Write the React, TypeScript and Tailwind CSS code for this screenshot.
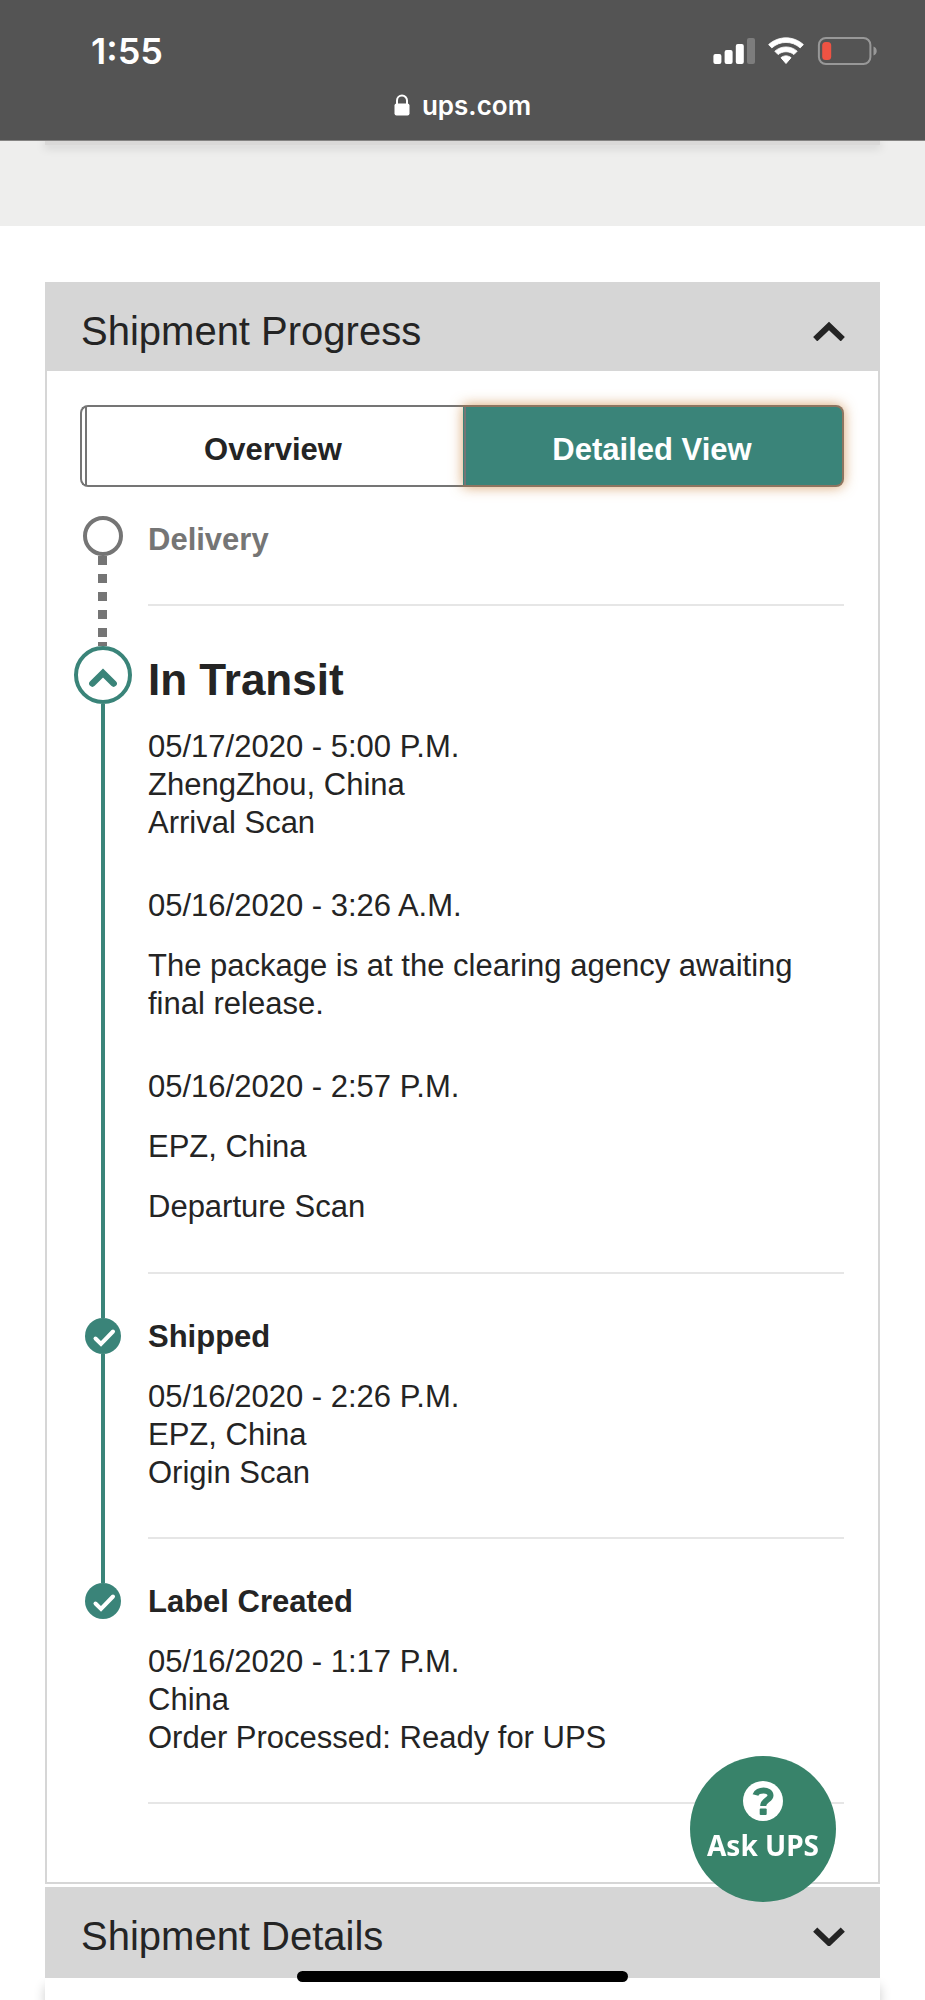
import React, { useState } from "react";

function Chevron({ down = false }: { down?: boolean }) {
  return (
    <svg className="h-5 w-8 shrink-0" viewBox="0 0 32 20" fill="none" stroke="currentColor" strokeWidth="6" aria-hidden="true">
      <path d={down ? "M2.2 3.6 16 16.8 29.8 3.6" : "M2.2 18.2 16 5 29.8 18.2"} />
    </svg>
  );
}

function CheckMark() {
  return (
    <svg className="size-9 shrink-0" viewBox="0 0 36 36" fill="none" aria-hidden="true">
      <circle cx="18" cy="18" r="18" fill="#3a8479" />
      <path d="M10.5 20.5 16 26 28 13.5" stroke="#fff" strokeWidth="4" strokeLinecap="round" strokeLinejoin="miter" />
    </svg>
  );
}

function StatusBar() {
  return (
    <header className="relative z-10 flex flex-col border-b border-[#858483] bg-[#545454] text-white">
      <div className="flex h-[84px] items-center justify-between pt-[17px] pr-[48px] pl-[91px]">
        <time className="font-['Inter',sans-serif] text-[36px] leading-10 font-semibold">1:55</time>
        <div className="flex items-center gap-[13px]">
          <svg className="h-7 w-[42px]" viewBox="0 0 42 28" aria-label="Cellular signal">
            <rect x="0.4" y="17" width="8" height="10" rx="2" fill="#fff" />
            <rect x="11.6" y="13" width="8" height="14" rx="2" fill="#fff" />
            <rect x="22.8" y="7" width="8" height="20" rx="2" fill="#fff" />
            <rect x="34" y="1" width="8" height="26" rx="2" fill="#7d7d7d" />
          </svg>
          <svg className="h-7 w-9" viewBox="0 0 36 28" aria-label="Wi-Fi">
            <path d="M.6 7.6C10.400-1.400 25.600-1.400 35.400 7.600L32.200 10.900C24 3.600 12 3.600 3.800 10.900Z" fill="#fff" stroke="#fff" strokeWidth="0.8" />
            <path d="M6.800 14.200C13.200 8.500 22.800 8.500 29.200 14.200L25.900 17.600C21.400 13.800 14.600 13.800 10.100 17.600Z" fill="#fff" stroke="#fff" strokeWidth="0.8" />
            <path d="M13 20.700C15.900 18.300 20.100 18.300 23 20.700L18 26.500Z" fill="#fff" stroke="#fff" strokeLinejoin="round" />
          </svg>
          <svg className="h-7 w-[60px]" viewBox="0 0 60 28" aria-label="Low battery">
            <rect x="1.900" y="1" width="51.500" height="26" rx="7" fill="none" stroke="#989898" strokeWidth="2" />
            <rect x="5.200" y="5" width="9" height="18" rx="3.500" fill="#ee5343" />
            <path d="M56.500 9.500C60.800 11 60.800 17 56.500 18.500Z" fill="#989898" />
          </svg>
        </div>
      </div>
      <div className="flex h-14 items-start justify-center gap-3">
        <svg className="mt-[10px] h-[22px] w-4" viewBox="0 0 16 22" aria-hidden="true">
          <path d="M3 10V6.500a5 5 0 0 1 10 0V10" fill="none" stroke="#fff" strokeWidth="2" />
          <rect x="0.500" y="9.500" width="15" height="12" rx="2" fill="#fff" />
        </svg>
        <a href="#" className="mt-1 font-['Inter',sans-serif] text-[26px] leading-9 font-semibold">ups.com</a>
      </div>
    </header>
  );
}

function Entry({ lines, spaced = false }: { lines: string[]; spaced?: boolean }) {
  return (
    <div className={spaced ? "flex flex-col gap-[22px]" : "flex flex-col"}>
      {lines.map((line) => (
        <p key={line}>{line}</p>
      ))}
    </div>
  );
}

export default function App() {
  const [detailed, setDetailed] = useState(true);
  const [open, setOpen] = useState(true);

  return (
    <div className="flex min-h-screen flex-col overflow-x-hidden bg-white font-['Liberation_Sans',Arial,sans-serif] text-[31px] leading-[38px] text-[#242424]">
      <StatusBar />
      <div className="h-[85px] bg-[#eeeeed] px-[45px]">
        <div className="h-1 bg-[#dad9d8] shadow-[0_2px_10px_1px_rgba(0,0,0,0.13)]" />
      </div>

      <main className="mt-14 flex grow flex-col px-[45px]">
        <section>
          <h2 className="text-[40px] leading-[48px]">
            <button
              type="button"
              aria-expanded={open}
              onClick={() => setOpen(!open)}
              className="flex w-full items-center justify-between bg-[#d6d6d6] pt-[25px] pr-[35px] pb-4 pl-9 text-left"
            >
              Shipment Progress
              <Chevron down={!open} />
            </button>
          </h2>
          {open && (
            <div className="border-2 border-t-0 border-[#d6d6d6] pt-[34px] pr-[34px] pb-[78px] pl-[27px]">
              <div className="ml-1.5 flex h-[82px] font-bold">
                <button
                  type="button"
                  aria-pressed={!detailed}
                  onClick={() => setDetailed(false)}
                  className="flex flex-1 rounded-l-lg border-2 border-r-0 border-[#757575] pl-[3px]"
                >
                  <span className="flex h-full grow items-center justify-center border-l-2 border-[#757575] pt-2 pr-1">Overview</span>
                </button>
                <button
                  type="button"
                  aria-pressed={detailed}
                  onClick={() => setDetailed(true)}
                  className="flex flex-1 rounded-r-lg border-2 border-l-0 border-[#8d7560] bg-[#3a8479] pl-px text-white shadow-[0_0_13px_rgba(200,125,50,0.7)]"
                >
                  <span className="flex h-full grow items-center justify-center border-l-2 border-[#757575] pt-2 pr-1">Detailed View</span>
                </button>
              </div>

              <ol className="mt-[29px]">
                <li className="flex gap-[17px]">
                  <div className="flex w-[57px] shrink-0 flex-col items-center">
                    <span className="size-10 rounded-full border-4 border-[#757575]" />
                    <span className="w-[9px] grow bg-[linear-gradient(#757575_50%,transparent_50%)] bg-[length:9px_18px]" />
                  </div>
                  <div className="grow border-b-2 border-[#e6e6e6] pt-[5px] pb-[45px]">
                    <h3 className="font-bold text-[#757575]">Delivery</h3>
                  </div>
                </li>

                <li className="flex gap-[17px]">
                  <div className="flex w-[57px] shrink-0 flex-col items-center">
                    <span className="h-9 w-[9px] bg-[linear-gradient(#757575_50%,transparent_50%)] bg-[length:9px_18px] bg-[position:0_4px]" />
                    <span className="h-1 w-[9px] bg-[#757575]" />
                    <button
                      type="button"
                      aria-label="Collapse In Transit"
                      className="flex size-[58px] shrink-0 items-center justify-center rounded-full border-4 border-[#3a8479] pt-1 text-[#3a8479]"
                    >
                      <svg className="h-5 w-7" viewBox="0 0 28 20" fill="none" stroke="currentColor" strokeWidth="6.5" aria-hidden="true">
                        <path d="M3.400 16.500 14 6 24.600 16.500" strokeLinecap="round" />
                      </svg>
                    </button>
                    <span className="w-1 grow bg-[#3a8479]" />
                  </div>
                  <div className="grow border-b-2 border-[#e6e6e6] pt-11 pb-[46px]">
                    <h3 className="mb-[18px] text-[44px] leading-[60px] font-bold">In Transit</h3>
                    <div className="flex flex-col gap-[45px]">
                      <Entry lines={["05/17/2020 - 5:00 P.M.", "ZhengZhou, China", "Arrival Scan"]} />
                      <Entry
                        spaced
                        lines={["05/16/2020 - 3:26 A.M.", "The package is at the clearing agency awaiting final release."]}
                      />
                      <Entry spaced lines={["05/16/2020 - 2:57 P.M.", "EPZ, China", "Departure Scan"]} />
                    </div>
                  </div>
                </li>

                <li className="flex gap-[17px]">
                  <div className="flex w-[57px] shrink-0 flex-col items-center">
                    <span className="h-11 w-1 bg-[#3a8479]" />
                    <CheckMark />
                    <span className="w-1 grow bg-[#3a8479]" />
                  </div>
                  <div className="grow border-b-2 border-[#e6e6e6] pt-11 pb-[45px]">
                    <h3 className="mb-[22px] font-bold">Shipped</h3>
                    <Entry lines={["05/16/2020 - 2:26 P.M.", "EPZ, China", "Origin Scan"]} />
                  </div>
                </li>

                <li className="flex gap-[17px]">
                  <div className="flex w-[57px] shrink-0 flex-col items-center">
                    <span className="h-11 w-1 bg-[#3a8479]" />
                    <CheckMark />
                  </div>
                  <div className="grow border-b-2 border-[#e6e6e6] pt-11 pb-[45px]">
                    <h3 className="mb-[22px] font-bold">Label Created</h3>
                    <Entry lines={["05/16/2020 - 1:17 P.M.", "China", "Order Processed: Ready for UPS"]} />
                  </div>
                </li>
              </ol>
            </div>
          )}
        </section>

        <section className="relative mt-[3px]">
          <h2 className="text-[40px] leading-[48px]">
            <button
              type="button"
              aria-expanded={false}
              className="flex w-full items-center justify-between bg-[#d6d6d6] pt-[25px] pr-[35px] pb-[18px] pl-9 text-left"
            >
              Shipment Details
              <Chevron down />
            </button>
          </h2>
        </section>
        <div className="grow bg-white shadow-[0_8px_12px_rgba(0,0,0,0.2)]" />
      </main>

      <button
        type="button"
        className="fixed right-[89px] bottom-[98px] flex size-[146px] flex-col items-center rounded-full bg-[#38836a] pt-[25px] font-['Noto_Sans',sans-serif] text-[28px] leading-9 font-bold text-white"
      >
        <svg className="mb-1.5 size-10 shrink-0" viewBox="0 0 40 40" fill="none" aria-hidden="true">
          <circle cx="20" cy="20" r="20" fill="#fff" />
          <path d="M12.500 14C14 8.200 27.500 7.500 27.500 14.500C27.500 19 20.200 19 20.200 25" stroke="#38836a" strokeWidth="6" />
          <rect x="16.700" y="27.500" width="7" height="6.500" rx="1" fill="#38836a" />
        </svg>
        Ask UPS
      </button>
      <div className="fixed inset-x-0 bottom-[18px] mx-auto h-[11px] w-[331px] rounded-full bg-black" />
    </div>
  );
}
